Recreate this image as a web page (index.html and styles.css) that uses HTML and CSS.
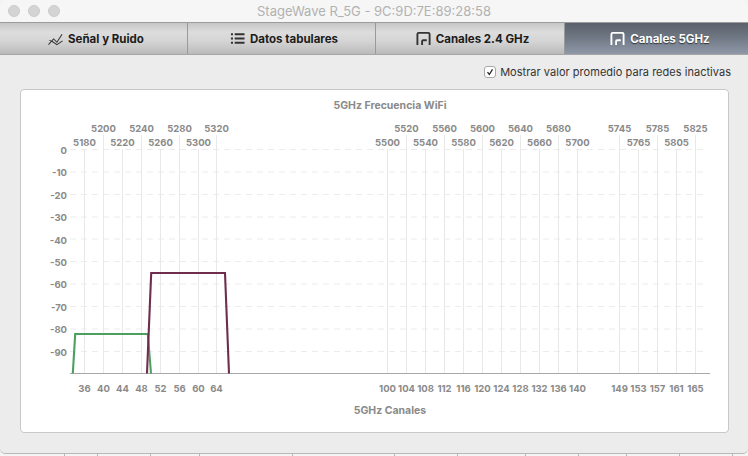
FILE: index.html
```html
<!DOCTYPE html>
<html lang="es">
<head>
<meta charset="utf-8">
<title>StageWave R_5G</title>
<link rel="stylesheet" href="styles.css">
</head>
<body>
<div class="window">
  <header class="titlebar">
    <div class="lights"><span class="light"></span><span class="light"></span><span class="light"></span></div>
    <div class="title">StageWave R_5G - 9C:9D:7E:89:28:58</div>
  </header>
  <nav class="tabs">
    <div class="tab">
      <svg class="icon" viewBox="0 0 16 16"><path d="M0.5 14.5 6 8.5l3.5 3.5 5.5-8.5" /><path d="M1.5 10 5 11.5l4.5 3 6-4" /></svg>
      <span>Señal y Ruido</span>
    </div>
    <div class="tab">
      <svg class="icon" viewBox="0 0 16 16"><path class="fat" d="M1 3.5h2.2M1 8h2.2M1 12.5h2.2M5 3.5h10.5M5 8h10.5M5 12.5h10.5" /></svg>
      <span>Datos tabulares</span>
    </div>
    <div class="tab">
      <svg class="icon" viewBox="0 0 16 16"><path class="fat" d="M1.500 15V3.500Q1.500 2 3 2h10Q14.500 2 14.500 3.500V15M6.500 15v-4Q6.500 9.800 7.700 9.800H11.500" /></svg>
      <span>Canales 2.4 GHz</span>
    </div>
    <div class="tab tab-active">
      <svg class="icon" viewBox="0 0 16 16"><path class="fat" d="M1.500 15V3.500Q1.500 2 3 2h10Q14.500 2 14.500 3.500V15M6.500 15v-4Q6.500 9.800 7.700 9.800H11.500" /></svg>
      <span>Canales 5GHz</span>
    </div>
  </nav>
  <main class="content">
    <div class="option">
      <span class="check"><svg viewBox="0 0 12 12"><path d="M3 6.200 5.200 9 9 2.800" /></svg></span>
      <span>Mostrar valor promedio para redes inactivas</span>
    </div>
    <section class="card">
      <svg class="chart" viewBox="20 89 709 344">
        <g class="hgrid">
          <path d="M70 149.500H706M70 172H706M70 194.500H706M70 217H706M70 239H706M70 261.500H706M70 284H706M70 306.500H706M70 329H706M70 351.500H706" />
        </g>
        <g class="vgrid">
          <path d="M84.500 149V373M122.500 149V373M160.500 149V373M198.500 149V373M387.500 149V373M425.500 149V373M463.500 149V373M501.500 149V373M539.500 149V373M577.500 149V373M638.500 149V373M676.500 149V373" />
          <path d="M103.500 135V373M141.500 135V373M179.500 135V373M216.500 135V373M406.500 135V373M444.500 135V373M482.500 135V373M520.500 135V373M558.500 135V373M619.500 135V373M657.500 135V373M695.500 135V373" />
        </g>
        <path class="axis" d="M70 373.500H710" />
        <path class="sig-green" d="M72.800 373.500 75.200 334H147.800L151 373.500" />
        <path class="sig-maroon" d="M147 373.500 151.200 273H225L229 373.500" />

        <text class="lbl heading mid" x="390" y="109">5GHz Frecuencia WiFi</text>
        <text class="lbl heading mid" x="390" y="414">5GHz Canales</text>

        <g class="lbl end">
          <text x="67" y="154">0</text><text x="67" y="176">-10</text><text x="67" y="199">-20</text><text x="67" y="221">-30</text><text x="67" y="244">-40</text><text x="67" y="266">-50</text><text x="67" y="288">-60</text><text x="67" y="311">-70</text><text x="67" y="333">-80</text><text x="67" y="356">-90</text>
        </g>

        <g class="lbl mid">
          <text x="103.500" y="132">5200</text><text x="141.500" y="132">5240</text><text x="179.500" y="132">5280</text><text x="216.500" y="132">5320</text>
          <text x="406.500" y="132">5520</text><text x="444.500" y="132">5560</text><text x="482.500" y="132">5600</text><text x="520.500" y="132">5640</text><text x="558.500" y="132">5680</text>
          <text x="619.500" y="132">5745</text><text x="657.500" y="132">5785</text><text x="695.500" y="132">5825</text>
          <text x="84.500" y="146">5180</text><text x="122.500" y="146">5220</text><text x="160.500" y="146">5260</text><text x="198.500" y="146">5300</text>
          <text x="387.500" y="146">5500</text><text x="425.500" y="146">5540</text><text x="463.500" y="146">5580</text><text x="501.500" y="146">5620</text><text x="539.500" y="146">5660</text><text x="577.500" y="146">5700</text>
          <text x="638.500" y="146">5765</text><text x="676.500" y="146">5805</text>
        </g>

        <g class="lbl mid">
          <text x="84.500" y="392">36</text><text x="103.500" y="392">40</text><text x="122.500" y="392">44</text><text x="141.500" y="392">48</text><text x="160.500" y="392">52</text><text x="179.500" y="392">56</text><text x="198.500" y="392">60</text><text x="216.500" y="392">64</text>
          <text x="387.500" y="392">100</text><text x="406.500" y="392">104</text><text x="425.500" y="392">108</text><text x="444.500" y="392">112</text><text x="463.500" y="392">116</text><text x="482.500" y="392">120</text><text x="501.500" y="392">124</text><text x="520.500" y="392">128</text><text x="539.500" y="392">132</text><text x="558.500" y="392">136</text><text x="577.500" y="392">140</text>
          <text x="619.500" y="392">149</text><text x="638.500" y="392">153</text><text x="657.500" y="392">157</text><text x="676.500" y="392">161</text><text x="695.500" y="392">165</text>
        </g>
      </svg>
    </section>
  </main>
</div>
<svg class="backdrop" viewBox="0 0 748 2"><path d="M64.500 0v2M97.500 0v2M150.500 0v2M199.500 0v2M292.500 0v2M394.500 0v2M457.500 0v2M525.500 0v2M578.500 0v2M626.500 0v2M679.500 0v2M732.500 0v2" /></svg>
</body>
</html>
```
FILE: styles.css
```css
* { box-sizing: border-box; }
html, body { margin: 0; padding: 0; }
body {
  width: 748px;
  height: 456px;
  overflow: hidden;
  display: flex;
  flex-direction: column;
  background: #f4f4f4;
  font-family: Inter, "Liberation Sans", sans-serif;
}
.window {
  height: 454px;
  display: flex;
  flex-direction: column;
  background: #ececec;
  border-bottom: 1px solid #b8b8b8;
  border-radius: 5px;
  overflow: hidden;
}
.backdrop { display: block; width: 748px; height: 2px; flex: none; }
.backdrop path { stroke: #b4b4b4; stroke-width: 1; fill: none; }
.titlebar {
  height: 23px;
  flex: none;
  display: flex;
  align-items: center;
  position: relative;
  background: #f6f6f6;
  border-bottom: 1px solid #9c9c9c;
}
.lights { display: flex; gap: 8px; padding-left: 8px; }
.light {
  width: 12px;
  height: 12px;
  border-radius: 50%;
  background: #d4d4d4;
  border: 1px solid #cbcbcb;
}
.title {
  position: absolute;
  left: 0;
  right: 0;
  text-align: center;
  font-size: 13px;
  color: #b2b2b2;
}
.tabs {
  height: 32px;
  flex: none;
  display: grid;
  grid-template-columns: 188px 188px 189px 183px;
  border-bottom: 1px solid #a6a6a6;
}
.tab {
  display: flex;
  align-items: center;
  justify-content: center;
  gap: 5px;
  padding-left: 5px;
  font-size: 11.500px;
  font-weight: 700;
  color: #1c1c1c;
  background: linear-gradient(#c6c6c6 0, #dddddd 30%, #d4d4d4 60%, #bababa 100%);
  border-right: 1px solid #9a9a9a;
}
.tab-active {
  color: #fff;
  padding-left: 7px;
  background: linear-gradient(#5a616d 0, #6c7480 40%, #8f98a8 100%);
  border-right: 0;
  text-shadow: 0 1px 1px #2b3038;
}
.icon { width: 15px; height: 15px; flex: none; fill: none; stroke: #333; stroke-width: 1.100; }
.icon .fat { stroke-width: 2; }
.tab-active .icon { stroke: #fff; }
.content {
  flex: 1;
  display: flex;
  flex-direction: column;
  padding: 0 19px 20px 20px;
}
.option {
  height: 34px;
  flex: none;
  display: flex;
  align-items: center;
  justify-content: flex-end;
  gap: 4px;
  margin-right: -2px;
  font-size: 11px;
  letter-spacing: 0.03px;
  color: #333;
}
.check {
  width: 12px;
  height: 12px;
  flex: none;
  background: #fff;
  border: 1px solid #a8a8a8;
  border-radius: 3px;
}
.check svg { display: block; width: 10px; height: 10px; fill: none; stroke: #222; stroke-width: 1.500; }
.card {
  flex: 1;
  background: #fff;
  border: 1px solid #c8c8c8;
  border-radius: 4px;
  overflow: hidden;
}
.chart { display: block; overflow: visible; margin: -1px; width: 709px; height: 344px; }
.hgrid path { stroke: #ececec; stroke-width: 1; stroke-dasharray: 6 5; fill: none; }
.vgrid path { stroke: #e8e8e8; stroke-width: 1; fill: none; }
.axis { stroke: #a8a8a8; stroke-width: 1; fill: none; }
.sig-green { stroke: #4b9f5f; stroke-width: 2.100; fill: none; }
.sig-maroon { stroke: #6e2d4c; stroke-width: 2.100; fill: none; }
.lbl { font-family: Inter, "Liberation Sans", sans-serif; font-size: 9.500px; font-weight: 700; fill: #8a8a8a; }
.heading { font-size: 10.500px; }
.mid { text-anchor: middle; }
.end { text-anchor: end; }
```
